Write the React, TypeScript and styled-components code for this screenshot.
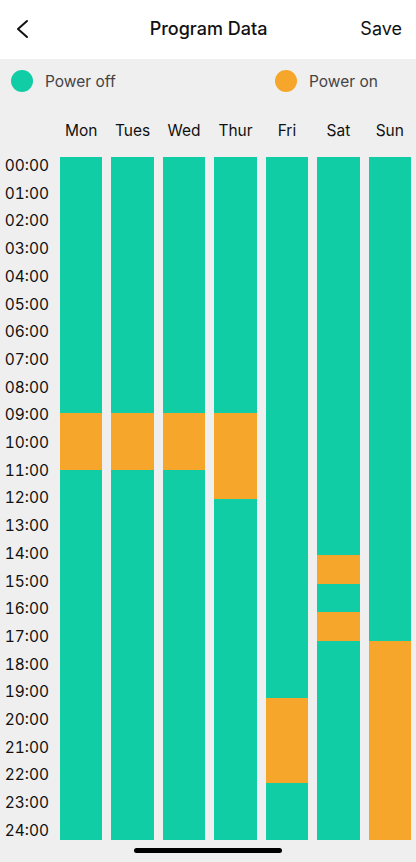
import React from "react";
import styled, { createGlobalStyle } from "styled-components";

const GREEN = "#10cda6";
const ORANGE = "#f6a62a";

const Global = createGlobalStyle`
  html, body { margin: 0; padding: 0; background: #efefef; }
  body { font-family: Inter, "Noto Sans", "Liberation Sans", sans-serif; -webkit-font-smoothing: antialiased; }
  * { box-sizing: border-box; }
`;

const Page = styled.div`
  width: 416px;
  height: 862px;
  background: #efefef;
  display: flex;
  flex-direction: column;
  position: relative;
  overflow: hidden;
`;

const Header = styled.header`
  height: 59px;
  background: #ffffff;
  display: grid;
  grid-template-columns: 80px 1fr 80px;
  align-items: center;
  padding: 0 14px 0 15px;
`;

const BackButton = styled.button`
  border: none;
  background: none;
  padding: 0;
  width: 20px;
  height: 24px;
  display: flex;
  align-items: center;
  justify-content: flex-start;
  margin-top: -2px;
`;

const Title = styled.h1`
  margin: 0;
  text-align: center;
  font-size: 18px;
  font-weight: 500;
  color: #111;
  margin-top: -2px;
`;

const SaveButton = styled.button`
  border: none;
  background: none;
  padding: 0;
  justify-self: end;
  font-family: inherit;
  font-size: 18px;
  color: #111;
  margin-top: -2px;
`;

const Legend = styled.div`
  height: 44px;
  display: grid;
  grid-template-columns: 264px 1fr;
  align-items: center;
  padding-left: 11px;
`;

const LegendItem = styled.div`
  display: flex;
  align-items: center;
  gap: 12px;
  font-size: 15.5px;
  color: #444;
`;

const Dot = styled.span<{ $color: string }>`
  width: 22px;
  height: 22px;
  border-radius: 50%;
  background: ${(p) => p.$color};
  display: inline-block;
`;

const Chart = styled.div`
  display: grid;
  grid-template-columns: 51px repeat(7, 1fr);
  grid-template-rows: 54px 683px;
  column-gap: 9px;
  padding-right: 5px;
`;

const DayLabel = styled.div`
  font-size: 15.5px;
  color: #111;
  text-align: center;
  padding-top: 18px;
`;

const Corner = styled.div``;

const TimeColumn = styled.div`
  display: flex;
  flex-direction: column;
  justify-content: space-between;
  align-items: flex-end;
  padding-right: 2px;
`;

const TimeLabel = styled.span`
  font-size: 15.5px;
  line-height: 18px;
  color: #111;
  font-variant-numeric: tabular-nums;
`;

const Bar = styled.div`
  display: flex;
  flex-direction: column;
  height: 683px;
`;

const Segment = styled.div<{ $on: boolean }>`
  background: ${(p) => (p.$on ? ORANGE : GREEN)};
`;

const HomeIndicator = styled.div`
  position: absolute;
  left: 134px;
  bottom: 9px;
  width: 148px;
  height: 5px;
  border-radius: 3px;
  background: #000;
`;

const days: { name: string; on: [number, number][] }[] = [
  { name: "Mon", on: [[9, 11]] },
  { name: "Tues", on: [[9, 11]] },
  { name: "Wed", on: [[9, 11]] },
  { name: "Thur", on: [[9, 12]] },
  { name: "Fri", on: [[19, 22]] },
  { name: "Sat", on: [[14, 15], [16, 17]] },
  { name: "Sun", on: [[17, 24]] },
];

function segmentsFor(on: [number, number][]) {
  const segs: { on: boolean; hours: number }[] = [];
  let t = 0;
  for (const [a, b] of on) {
    if (a > t) segs.push({ on: false, hours: a - t });
    segs.push({ on: true, hours: b - a });
    t = b;
  }
  if (t < 24) segs.push({ on: false, hours: 24 - t });
  return segs;
}

const times = Array.from({ length: 25 }, (_, i) => `${String(i).padStart(2, "0")}:00`);

export default function App() {
  return (
    <>
      <Global />
      <Page>
        <Header>
          <BackButton aria-label="Back">
            <svg width="14" height="20" viewBox="0 0 14 20">
              <polyline points="12,2 3,10 12,18" fill="none" stroke="#111" strokeWidth="2" strokeLinecap="round" strokeLinejoin="round" />
            </svg>
          </BackButton>
          <Title>Program Data</Title>
          <SaveButton>Save</SaveButton>
        </Header>
        <Legend>
          <LegendItem>
            <Dot $color={GREEN} />
            Power off
          </LegendItem>
          <LegendItem>
            <Dot $color={ORANGE} />
            Power on
          </LegendItem>
        </Legend>
        <Chart>
          <Corner />
          {days.map((d) => (
            <DayLabel key={d.name}>{d.name}</DayLabel>
          ))}
          <TimeColumn>
            {times.map((t) => (
              <TimeLabel key={t}>{t}</TimeLabel>
            ))}
          </TimeColumn>
          {days.map((d) => (
            <Bar key={d.name}>
              {segmentsFor(d.on).map((s, i) => (
                <Segment key={i} $on={s.on} style={{ flexGrow: s.hours, flexBasis: 0 }} />
              ))}
            </Bar>
          ))}
        </Chart>
        <HomeIndicator />
      </Page>
    </>
  );
}
